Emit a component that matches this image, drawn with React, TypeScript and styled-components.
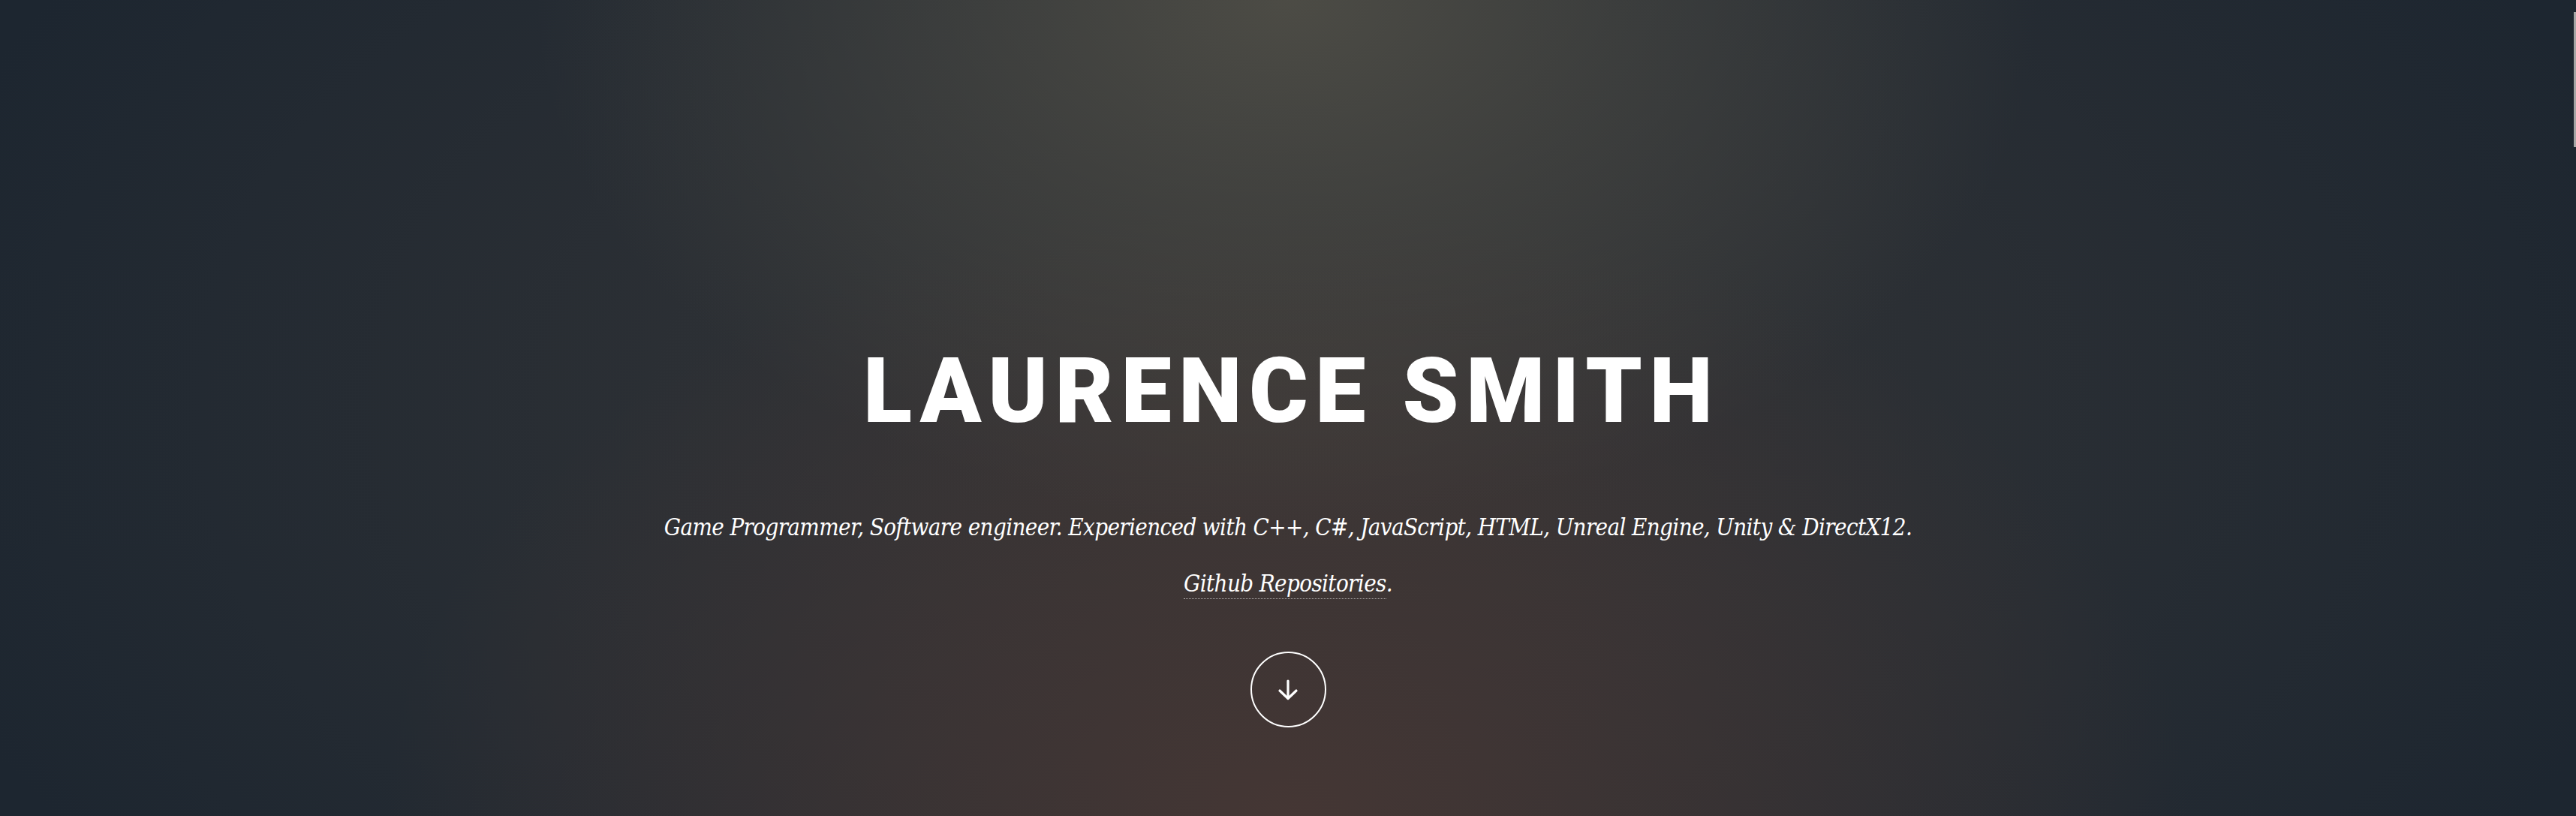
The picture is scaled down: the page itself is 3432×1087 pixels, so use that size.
import React from "react";
import styled, { createGlobalStyle } from "styled-components";

const GlobalStyle = createGlobalStyle`
  html, body {
    margin: 0;
    padding: 0;
    background: #1d2630;
    overflow: hidden;
  }
  * { box-sizing: border-box; }
`;

const Banner = styled.section`
  position: relative;
  width: 100%;
  height: 1087px;
  display: flex;
  flex-direction: column;
  align-items: center;
  padding-top: 449px;
  color: #ffffff;
  background-color: #1d2630;
  background-image:
    radial-gradient(ellipse 1000px 700px at 50% 0%, rgba(78, 77, 70, 0.95) 0%, rgba(78, 77, 70, 0.5) 45%, rgba(78, 77, 70, 0) 100%),
    radial-gradient(ellipse 1200px 820px at 50% 100%, rgba(70, 55, 52, 0.95) 0%, rgba(70, 55, 52, 0.55) 45%, rgba(70, 55, 52, 0) 100%),
    radial-gradient(ellipse 1900px 1100px at 50% 50%, rgba(56, 55, 55, 0.95) 0%, rgba(52, 53, 55, 0.55) 50%, rgba(29, 38, 48, 0) 100%);
`;

const Title = styled.h2`
  margin: 0;
  font-family: Roboto, "Liberation Sans", sans-serif;
  font-weight: 900;
  font-size: 120px;
  line-height: 144px;
  letter-spacing: 0.08em;
  text-transform: uppercase;
  padding-left: 0.08em;
  color: #ffffff;
`;

const Lead = styled.p<{ $gap: number }>`
  margin: ${(p) => p.$gap}px 0 0 0;
  font-family: "DejaVu Serif Condensed", "DejaVu Serif", "Liberation Serif", serif;
  font-stretch: condensed;
  font-style: italic;
  font-weight: 400;
  font-size: 31px;
  line-height: 48px;
  letter-spacing: -0.02em;
  color: #ffffff;
  text-align: center;
`;

const RepoLink = styled.a`
  color: #ffffff;
  text-decoration: none;
  border-bottom: dotted 1px rgba(255, 255, 255, 0.55);
  padding-bottom: 2px;
`;

const ScrollButton = styled.a`
  margin-top: 67px;
  width: 101px;
  height: 101px;
  border-radius: 50%;
  border: 2px solid #ffffff;
  display: flex;
  align-items: center;
  justify-content: center;
  color: #ffffff;
`;

const ScrollThumb = styled.div`
  position: absolute;
  top: 16px;
  right: 0;
  width: 3px;
  height: 180px;
  background: #a6a6a6;
`;

export default function App() {
  return (
    <>
      <GlobalStyle />
      <Banner>
        <Title>Laurence Smith</Title>
        <Lead $gap={85}>
          Game Programmer, Software engineer. Experienced with C++, C#, JavaScript, HTML, Unreal Engine, Unity &amp; DirectX12.
        </Lead>
        <Lead $gap={27}>
          <RepoLink href="#">Github Repositories</RepoLink>.
        </Lead>
        <ScrollButton href="#one" aria-label="Scroll down">
          <svg width="28" height="28" viewBox="0 0 28 28" fill="none" stroke="#ffffff" strokeWidth="3.2" strokeLinecap="round" strokeLinejoin="round">
            <line x1="14" y1="2" x2="14" y2="25" />
            <polyline points="3,15 14,25.5 25,15" />
          </svg>
        </ScrollButton>
        <ScrollThumb />
      </Banner>
    </>
  );
}
